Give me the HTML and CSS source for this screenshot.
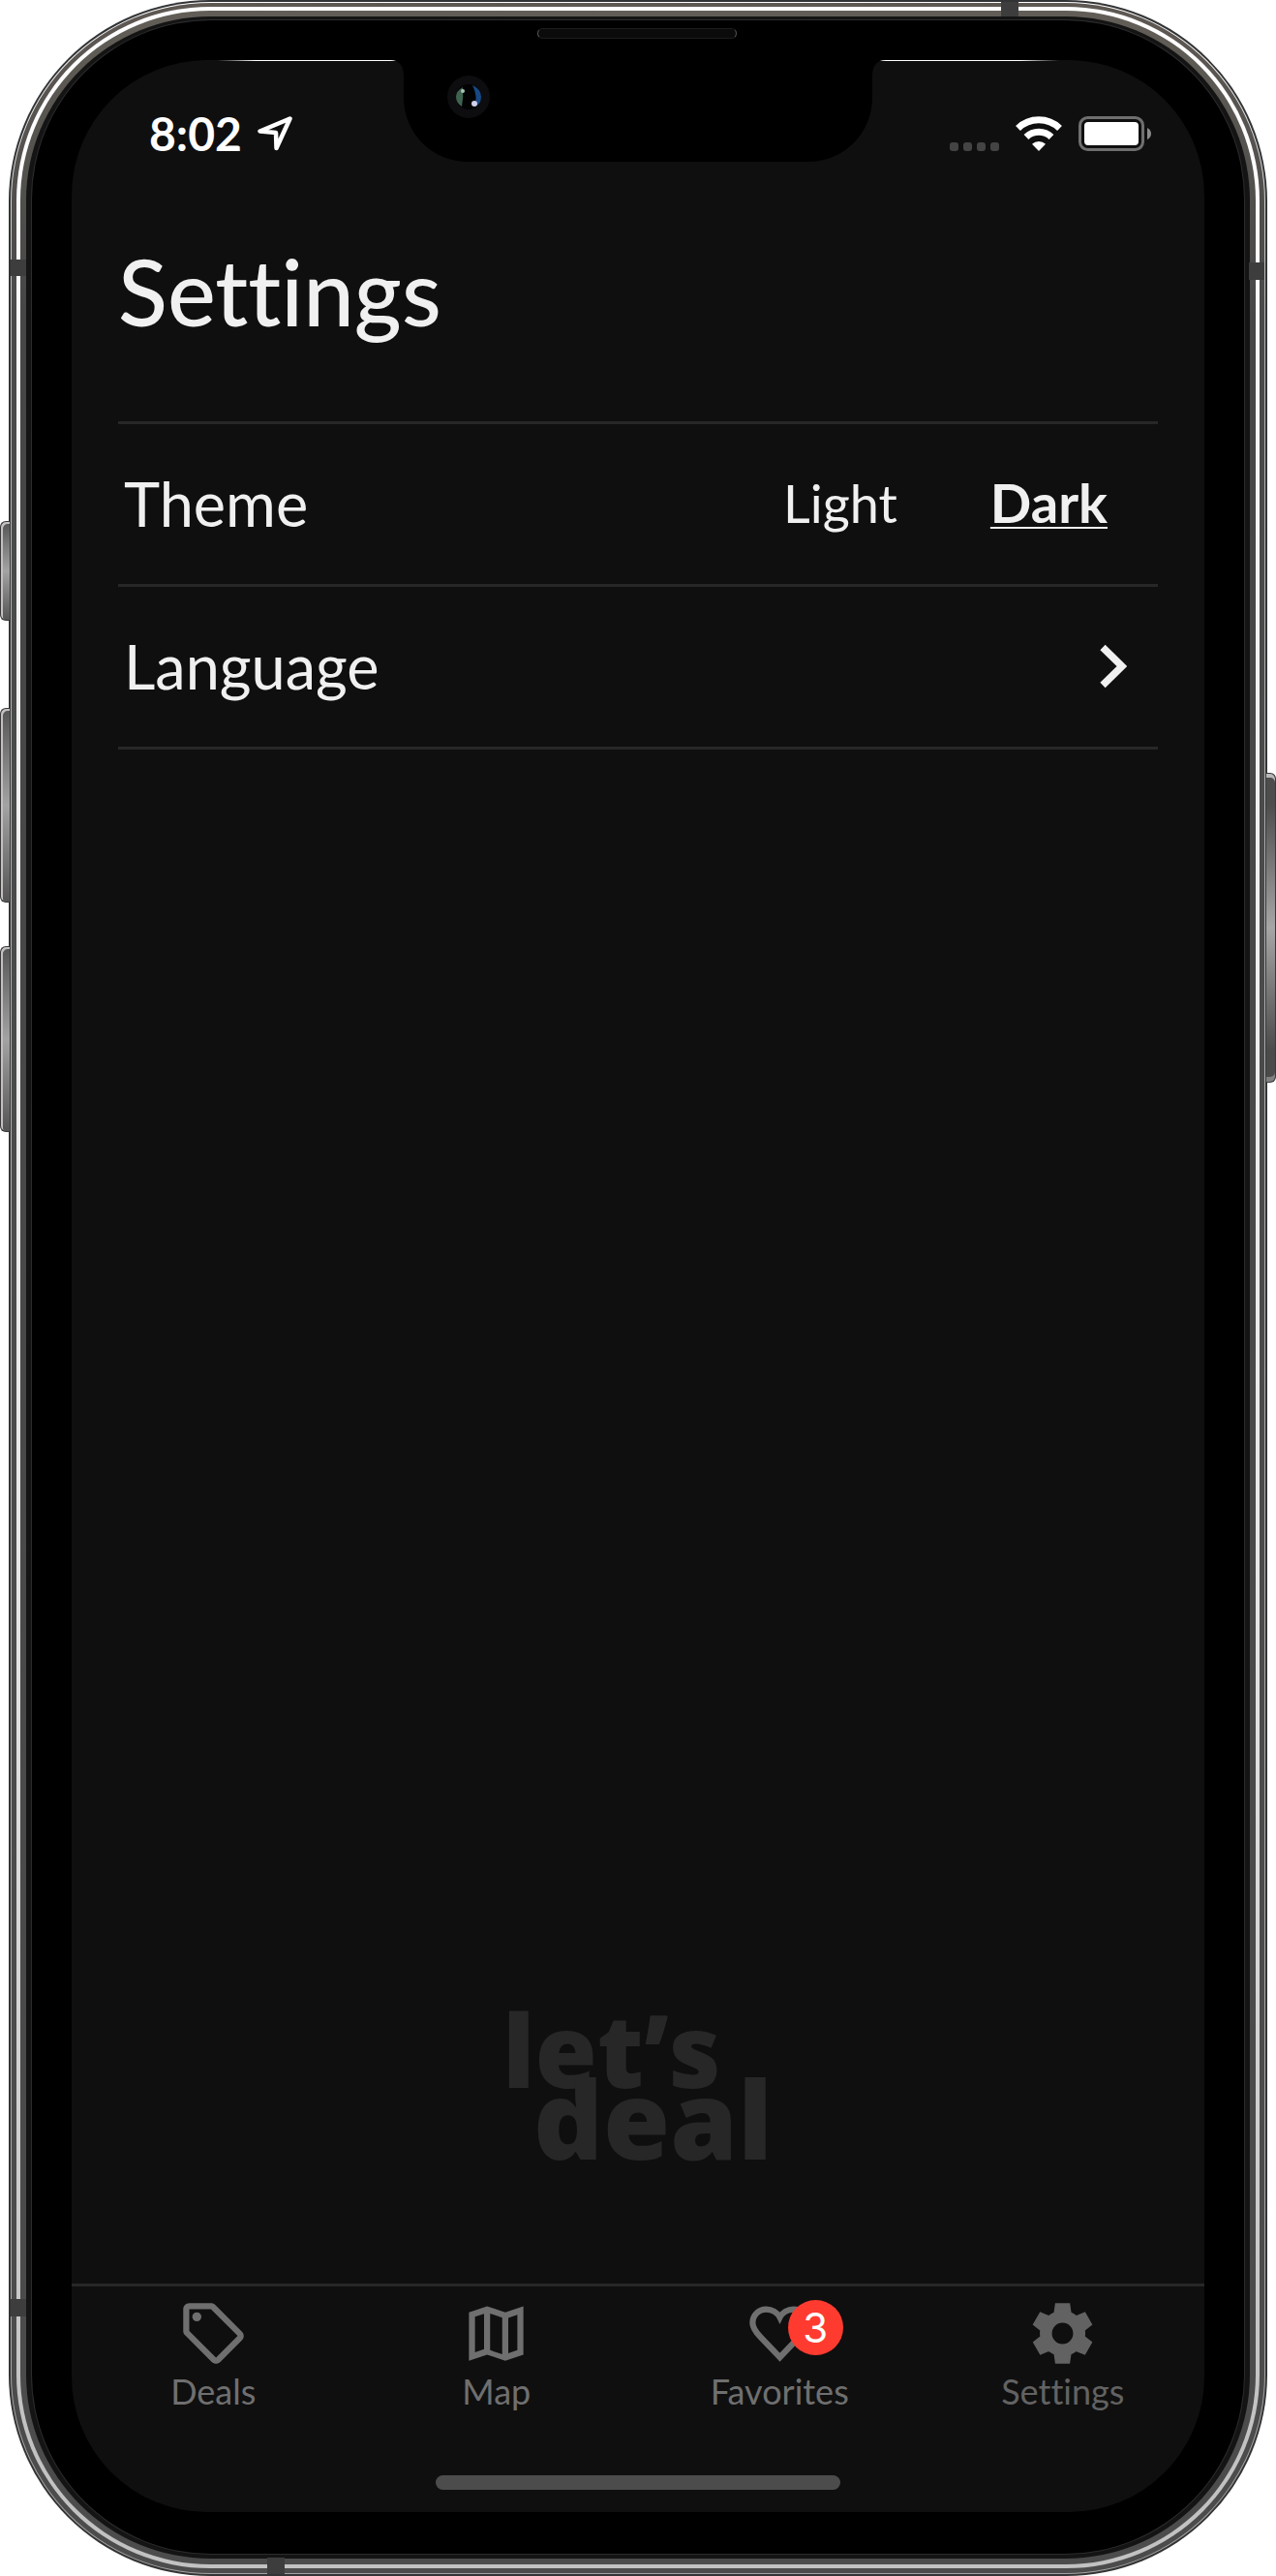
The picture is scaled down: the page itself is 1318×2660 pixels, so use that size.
FILE: index.html
```html
<!DOCTYPE html>
<html lang="en">
<head>
<meta charset="utf-8">
<meta name="viewport" content="width=device-width, initial-scale=1">
<title>Settings</title>
<link rel="stylesheet" href="styles.css">
</head>
<body>
<div class="device">
  <span class="key key-mute"></span>
  <span class="key key-up"></span>
  <span class="key key-down"></span>
  <span class="key key-power"></span>
  <div class="edge"><div class="glint"><div class="band"><div class="shine"><div class="inner-band"><div class="lip">
    <div class="bezel">
      <div class="screen">
        <header class="status">
          <div class="status-left">
            <span class="time">8:02</span>
            <svg class="location" viewBox="0 0 36 36" aria-hidden="true"><path d="M33.500 2.500 2.500 15.500 19 17 19.500 33z" fill="none" stroke="#fff" stroke-width="4.500" stroke-linejoin="round"/></svg>
          </div>
          <div class="status-right">
            <span class="signal"><i></i><i></i><i></i><i></i></span>
            <svg class="wifi" viewBox="0 0 48 36" aria-hidden="true"><g fill="none" stroke="#fff"><path d="M2.500 12.500a31 31 0 0 1 43 0" stroke-width="7"/><path d="M11 21.500a19 19 0 0 1 26 0" stroke-width="7"/></g><path d="M24 36 17 28.800a10 10 0 0 1 14 0z" fill="#fff"/></svg>
            <svg class="battery" viewBox="0 0 76 36" aria-hidden="true"><rect x="1.500" y="1.500" width="65" height="33" rx="8" fill="none" stroke="#6f6f6f" stroke-width="3"/><rect x="6" y="6" width="56" height="24" rx="4" fill="#fff"/><path d="M71 12q4 2 4 6t-4 6z" fill="#8a8a8a"/></svg>
          </div>
        </header>
        <main class="content">
          <h1>Settings</h1>
          <div class="list">
            <div class="row">
              <span id="theme-label">Theme</span>
              <div class="theme" role="group" aria-labelledby="theme-label">
                <button type="button" class="option" aria-pressed="false">Light</button>
                <button type="button" class="option selected" aria-pressed="true">Dark</button>
              </div>
            </div>
            <button type="button" class="row row-button">
              <span>Language</span>
              <svg class="chevron" viewBox="0 0 28 46" aria-hidden="true"><path d="M3 3.500 23 23 3 42.500" fill="none" stroke="#f0f0f0" stroke-width="7.500"/></svg>
            </button>
          </div>
          <div class="logo"><span>let’s</span><span class="logo-second">deal</span></div>
        </main>
        <nav class="tabs">
          <a href="#deals" class="tab">
            <svg class="icon" viewBox="0 0 24 24" aria-hidden="true"><path d="M21.410 11.410l-8.830-8.830c-.37-.37-.88-.58-1.410-.58H4c-1.100 0-2 .9-2 2v7.170c0 .53.21 1.040.59 1.410l8.830 8.830c.78.78 2.050.78 2.830 0l7.170-7.170c.78-.78.78-2.040-.01-2.830zM12.830 20 4 11.170V4h7.170L20 12.830z"/><circle cx="6.500" cy="6.500" r="1.500"/></svg>
            <span>Deals</span>
          </a>
          <a href="#map" class="tab">
            <svg class="icon" viewBox="0 0 24 24" aria-hidden="true"><path fill-rule="evenodd" d="M3 5l6-2 6 2 6-2v16l-6 2-6-2-6 2zM5 6.500v11.700l3-1V5.500zM10 5.450v12.100l4 1.350V6.800zM16 6.850v11.700l3-1V5.850z"/></svg>
            <span>Map</span>
          </a>
          <a href="#favorites" class="tab">
            <span class="icon-wrap">
              <svg class="icon" viewBox="0 0 24 24" aria-hidden="true"><path d="M12 19.900 5.500 13.100C3.900 11.400 3 10.100 3 8.500A4.500 4.500 0 0 1 7.500 4C9.400 4 11.200 5.100 12 6.700 12.800 5.100 14.600 4 16.500 4A4.500 4.500 0 0 1 21 8.500c0 1.600-.9 2.900-2.500 4.600z" fill="none" stroke="currentColor" stroke-width="2"/></svg>
              <span class="badge">3</span>
            </span>
            <span>Favorites</span>
          </a>
          <a href="#settings" class="tab current" aria-current="page">
            <svg class="icon" viewBox="0 0 24 24" aria-hidden="true"><path fill-rule="evenodd" d="M19.440 12.990l.01.02c.04-.33.08-.67.08-1.010 0-.34-.03-.66-.07-.99l-.01.02 2.440-1.920-2.430-4.220-2.870 1.160.01.01c-.52-.4-1.090-.74-1.710-1h.01L14.440 2H9.570l-.44 3.070h.01c-.62.26-1.190.6-1.710 1l.01-.01-2.880-1.170-2.440 4.220 2.440 1.920.01-.02c-.04.33-.07.65-.07.99 0 .34.03.68.08 1.010l.01-.02-2.430 1.910 2.430 4.200 2.880-1.150-.02-.04c.53.41 1.100.75 1.730 1.010h-.03L9.580 22h4.850l.44-3.070h-.01c.62-.26 1.200-.6 1.730-1.010l-.02.04 2.880 1.150 2.430-4.200zM12 15.500a3.500 3.500 0 1 1 0-7 3.500 3.500 0 0 1 0 7z"/></svg>
            <span>Settings</span>
          </a>
        </nav>
        <div class="home"></div>
        <svg class="notch" viewBox="0 0 512 105" aria-hidden="true">
          <path d="M0 0Q14 0 14 17V39A66 66 0 0 0 80 105H432A66 66 0 0 0 498 39V17Q498 0 512 0z" fill="#000"/>
          <circle cx="81" cy="38" r="22" fill="#0d0d0f"/>
          <circle cx="81" cy="38" r="13" fill="#020203"/>
          <path d="M75 28q-7 4-7 10t6 10q2-10 1-20z" fill="#3f6350"/>
          <path d="M85 26q9 4 9 12t-7 10q4-10-2-22z" fill="#174a85"/>
          <circle cx="75" cy="32" r="2" fill="#a9c4b5"/>
          <circle cx="87" cy="45" r="3" fill="#d3cfea"/>
        </svg>
      </div>
      <span class="speaker"></span>
    </div>
  </div></div></div></div></div></div>
  <span class="antenna antenna-top"></span>
  <span class="antenna antenna-bottom"></span>
  <span class="antenna antenna-left"></span>
  <span class="antenna antenna-left-low"></span>
  <span class="antenna antenna-right"></span>
</div>
</body>
</html>
```
FILE: styles.css
```css
* { box-sizing: border-box; }

body {
  margin: 0;
  background: #fff;
  color: #f0f0f0;
  font-family: Lato, "Liberation Sans", sans-serif;
  font-variant-ligatures: none;
}

button {
  border: 0;
  padding: 0;
  background: none;
  color: inherit;
  font: inherit;
  font-variant-ligatures: none;
  cursor: pointer;
}

/* Phone body: one nested layer for each ring of the metal edge */
.device {
  position: relative;
  display: flex;
  min-height: 100vh;
  padding: 0 9px;
}

.edge, .glint, .band, .shine, .inner-band, .lip, .bezel {
  display: flex;
  flex: 1;
  min-width: 0;
}

.edge { padding: 2px; border-radius: 208px; background: #333435; }
.glint { padding: 1px; border-radius: 206px; background: linear-gradient(#fff, #b4b4b4 12%, #a4a4a4); }
.band { padding: 4px 5px 5px; border-radius: 205px; background: linear-gradient(#5e5853, #4a4a4a 12%, #4c4c4c); }
.shine { padding: 4px; border-radius: 200px; background: linear-gradient(#fff, #f2f2f2 25%, #e8e8e8 60%, #c2c2c2 95%); }
.inner-band { padding: 6px; border-radius: 196px; background: linear-gradient(#625e57, #464646 12%, #4c4c4c); }
.lip { padding: 4px 6px 5px; border-radius: 190px; background: #141414; }

.bezel {
  position: relative;
  padding: 41px 41px 43px;
  border-radius: 185px;
  background: #000;
  box-shadow: 0 0 0 1px #2c2c2c;
}

.screen {
  position: relative;
  display: flex;
  flex: 1;
  flex-direction: column;
  min-width: 0;
  border-radius: 140px;
  background:
    linear-gradient(90deg, transparent 150px, #fff 190px, #fff calc(100% - 190px), transparent calc(100% - 150px)) top / 100% 1px no-repeat,
    #0f0f0f;
}

.key {
  position: absolute;
  left: 0;
  width: 10px;
  border: solid #3a3a3a;
  border-width: 1px 0 1px 1px;
  border-radius: 6px 0 0 6px;
  background: linear-gradient(#555, #a3a3a3 50%, #555);
  box-shadow: inset 2px 2px 0 #c4c0c0;
}

.key-mute { top: 538px; height: 103px; }
.key-up { top: 731px; height: 201px; }
.key-down { top: 977px; height: 192px; }
.key-power {
  top: 798px;
  right: 0;
  left: auto;
  height: 320px;
  border-width: 1px 1px 1px 0;
  border-radius: 0 6px 6px 0;
  background: linear-gradient(#4d4d4d 10%, #a6a6a6 50%, #4a4a4a 90%);
  box-shadow: inset 0 4px 0 #b8b8b8, inset 0 -5px 0 #808080;
}

.antenna { position: absolute; background: #3d3d3d; }
.antenna-top { top: 2px; right: 266px; width: 18px; height: 15px; }
.antenna-bottom { bottom: 2px; left: 276px; width: 18px; height: 17px; }
.antenna-left { top: 268px; left: 11px; width: 16px; height: 17px; }
.antenna-left-low { bottom: 268px; left: 11px; width: 16px; height: 18px; }
.antenna-right { top: 271px; right: 12px; width: 16px; height: 18px; }

.speaker {
  position: absolute;
  top: 8px;
  left: calc(50% - 104px);
  width: 206px;
  height: 11px;
  border: 1px solid #1c1c1c;
  border-right-color: #555;
  border-left-color: #555;
  border-radius: 6px;
  background: #0b0b0b;
}

.notch {
  position: absolute;
  top: 0;
  left: calc(50% - 256px);
  width: 512px;
  height: 105px;
}

.status {
  display: flex;
  align-items: center;
  justify-content: space-between;
  height: 151px;
  padding: 0 54px 0 80px;
  color: #fff;
}

.status-left, .status-right { display: flex; align-items: center; }
.status-left { gap: 16px; }
.status-right { gap: 17px; }
.time { font-size: 48px; font-weight: 700; line-height: 56px; }
.location { width: 36px; height: 36px; }
.signal { display: flex; align-self: flex-end; gap: 5px; }
.signal i { width: 9px; height: 9px; border-radius: 3px; background: #444; }
.wifi { width: 48px; height: 36px; }
.battery { width: 76px; height: 36px; }

.content {
  display: flex;
  flex: 1;
  flex-direction: column;
  padding: 34px 48px 136px;
}

h1 {
  margin: 0 0 80px;
  font-size: 94px;
  font-weight: 500;
  line-height: 108px;
}

.list { border-bottom: 3px solid #272727; }

.row {
  display: flex;
  align-items: center;
  justify-content: space-between;
  width: 100%;
  height: 168px;
  padding: 0 32px 2px 6px;
  border-top: 3px solid #272727;
  font-size: 63px;
  line-height: 72px;
}

.theme { display: flex; align-items: baseline; gap: 96px; padding-right: 20px; }
.option { font-size: 54px; line-height: 64px; }
.selected {
  font-size: 56px;
  font-weight: 700;
  text-decoration: underline;
  text-decoration-thickness: 2px;
  text-underline-offset: 4px;
  text-decoration-skip-ink: none;
}
.chevron { width: 28px; height: 46px; }

.logo {
  display: flex;
  flex-direction: column;
  align-self: center;
  width: 280px;
  margin-top: auto;
  color: #272727;
  font-family: "Open Sans", Lato, sans-serif;
  font-size: 104px;
  font-weight: 800;
  line-height: 71px;
}
.logo-second { padding-left: 32px; font-size: 112px; }

.tabs { display: flex; border-top: 3px solid #272727; }

.tab {
  display: flex;
  flex: 1;
  flex-direction: column;
  align-items: center;
  padding-top: 11px;
  color: #6f6f6f;
  font-size: 36px;
  line-height: 45px;
  text-decoration: none;
}
.current { color: #626262; }
.icon { display: block; width: 75px; height: 75px; fill: currentColor; }
.icon-wrap { position: relative; }

.badge {
  position: absolute;
  top: 3px;
  left: 46px;
  width: 57px;
  height: 57px;
  border-radius: 50%;
  background: #ff3b30;
  color: #fff;
  font-family: Inter, sans-serif;
  font-size: 42px;
  line-height: 57px;
  text-align: center;
}

.home {
  width: 418px;
  max-width: 80%;
  height: 15px;
  margin: 64px auto 23px;
  border-radius: 8px;
  background: #4c4c4c;
}
```
